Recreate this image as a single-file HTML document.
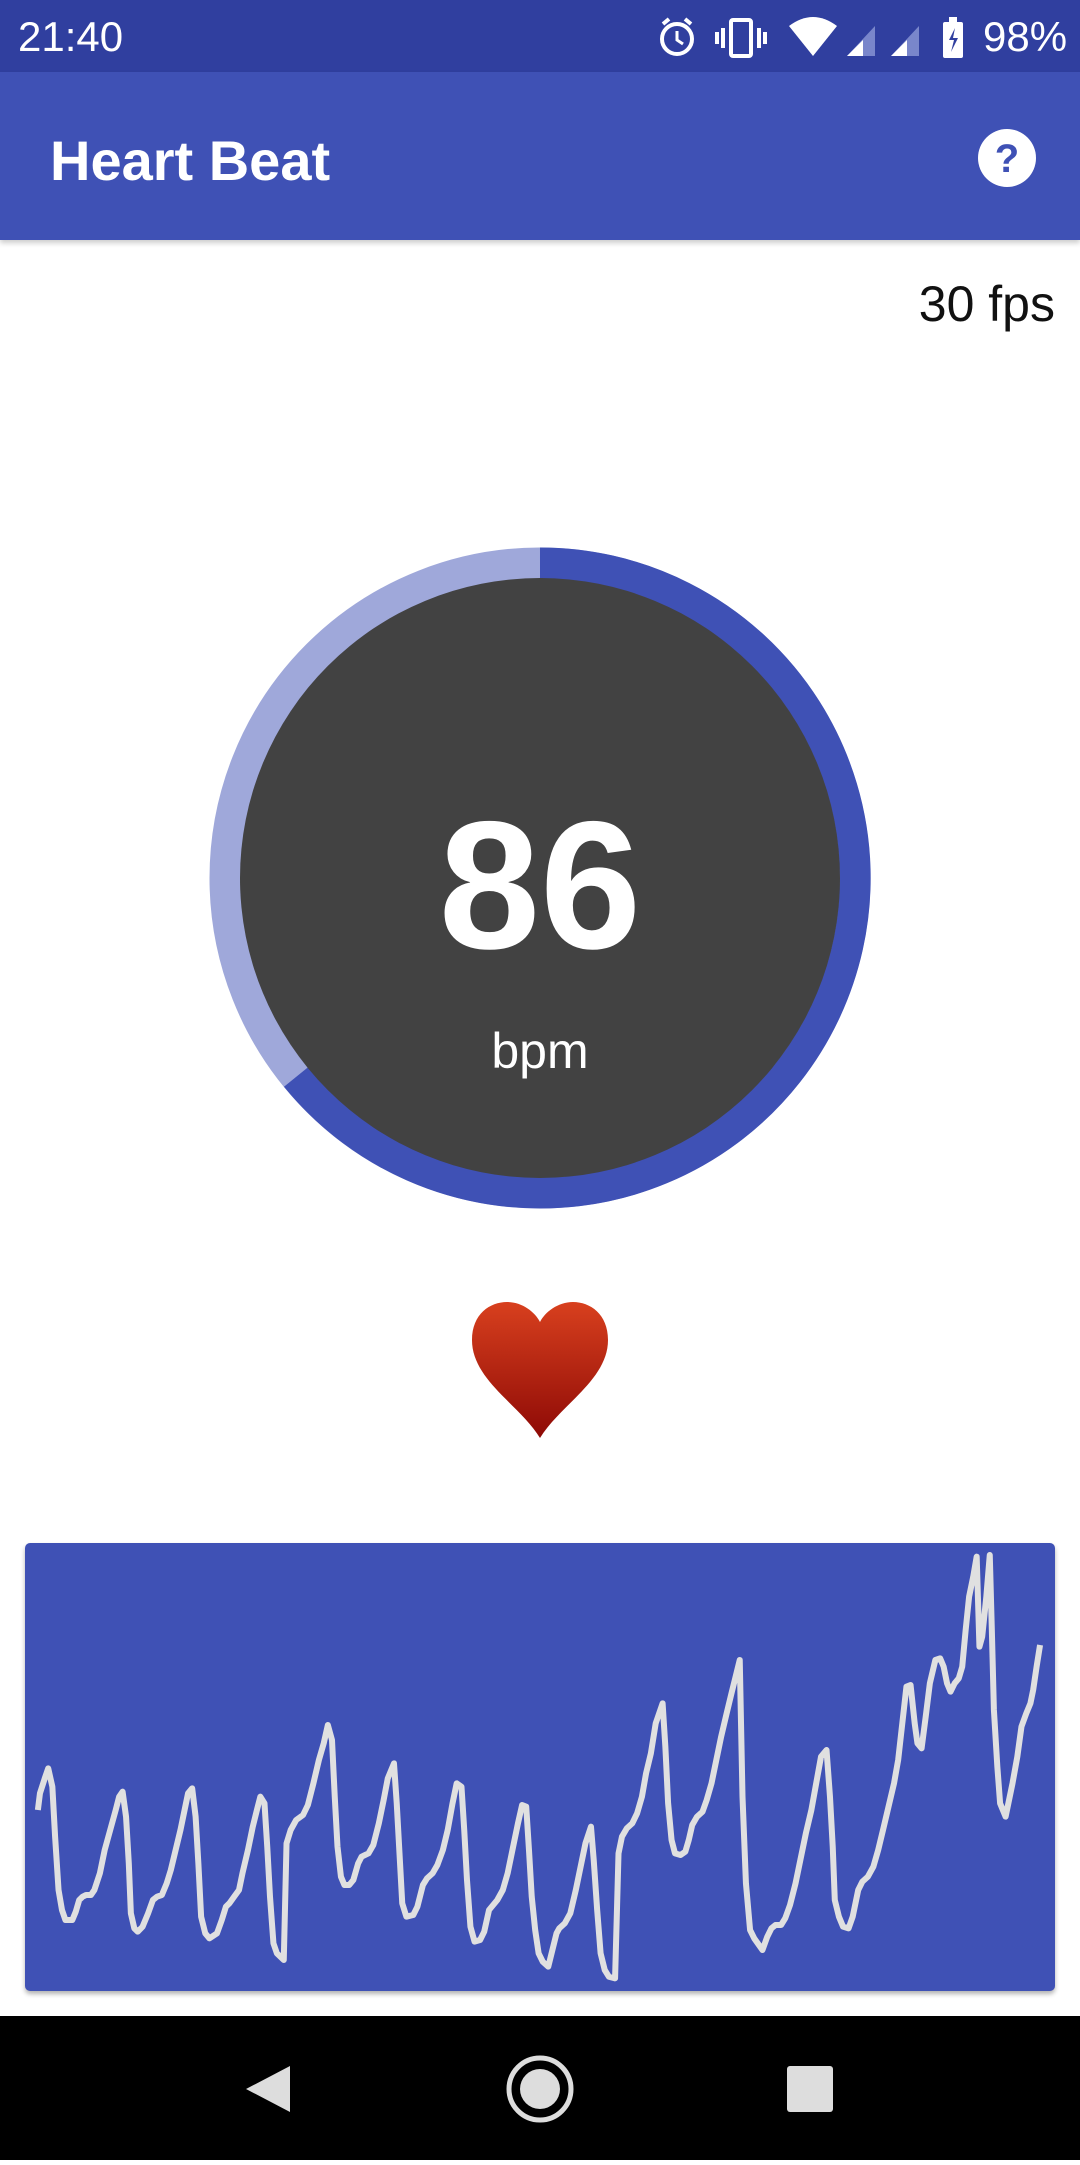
<!DOCTYPE html>
<html><head><meta charset="utf-8"><style>
*{margin:0;padding:0;box-sizing:border-box}
body{width:1080px;height:2160px;position:relative;background:#fff;font-family:"Liberation Sans",sans-serif;overflow:hidden}
.sb{position:absolute;left:0;top:0;width:1080px;height:72px;background:#303F9F;color:#fff}
.ab{position:absolute;left:0;top:72px;width:1080px;height:168px;background:#3F51B5;box-shadow:0 3px 5px rgba(0,0,0,.2)}
.abt{position:absolute;left:50px;top:56px;color:#fff;font-size:56px;font-weight:bold}
.fps{position:absolute;right:25px;top:275px;font-size:50px;color:#111}
.nav{position:absolute;left:0;top:2016px;width:1080px;height:144px;background:#000}
.chart{position:absolute;left:25px;top:1543px;width:1030px;height:448px;background:#3F51B5;border-radius:5px;box-shadow:0 3px 5px rgba(0,0,0,.3)}
</style></head><body>
<div class="sb">
<div style="position:absolute;left:18px;top:13px;font-size:42px">21:40</div>
<svg style="position:absolute;left:655px;top:14px" width="420" height="46" viewBox="0 0 420 46">
<circle cx="22" cy="25" r="15" fill="none" stroke="#fff" stroke-width="4"/><path d="M22 17v9l6 4" stroke="#fff" stroke-width="3" fill="none"/><path d="M8 10l6-5M36 10l-6-5" stroke="#fff" stroke-width="4"/>
<rect x="76" y="6" width="20" height="36" rx="2" fill="none" stroke="#fff" stroke-width="4"/><path d="M68 14v20M104 14v20M62 18v12M110 18v12" stroke="#fff" stroke-width="4"/>
<path d="M134 12 Q158 -6 182 12 L158 42Z" fill="#fff"/>
<path d="M192 42 L220 12 V42Z" fill="#7986CB"/><path d="M192 42 L208 26 V42Z" fill="#fff"/>
<path d="M236 42 L264 12 V42Z" fill="#7986CB"/><path d="M236 42 L252 26 V42Z" fill="#fff"/>
<rect x="288" y="8" width="20" height="36" rx="2" fill="#fff"/><rect x="294" y="3" width="8" height="6" fill="#fff"/><path d="M300 14l-6 12h5l-3 12 7-14h-5z" fill="#303F9F"/>
</svg>
<div style="position:absolute;left:983px;top:13px;font-size:42px">98%</div>
</div>
<div class="ab"><div class="abt">Heart Beat</div>
<svg style="position:absolute;left:977px;top:56px" width="60" height="60" viewBox="0 0 60 60"><circle cx="30" cy="30" r="29" fill="#fff"/><text x="30" y="44" text-anchor="middle" font-family="Liberation Sans" font-weight="bold" font-size="40" fill="#3F51B5">?</text></svg>
</div>
<div class="fps">30 fps</div>
<svg style="position:absolute;left:0;top:0" width="1080" height="1500">
<circle cx="540" cy="878" r="315" fill="none" stroke="#9FA8DA" stroke-width="31"/>
<path d="M540 563 A315 315 0 1 1 296 1077" fill="none" stroke="#3F51B5" stroke-width="31"/>
<circle cx="540" cy="878" r="300" fill="#424242"/>
<text x="540" y="948" text-anchor="middle" font-family="Liberation Sans" font-weight="bold" font-size="182" fill="#fff">86</text>
<text x="540" y="1068" text-anchor="middle" font-family="Liberation Sans" font-size="50" fill="#fff">bpm</text>
<defs><linearGradient id="hg" x1="0" y1="0" x2="0" y2="1"><stop offset="0" stop-color="#D8401E"/><stop offset="1" stop-color="#8E0A06"/></linearGradient></defs>
<path d="M540 1438 C520 1405 472 1380 472 1340 C472 1314 490 1302 507 1302 C522 1302 535 1312 540 1322 C545 1312 558 1302 573 1302 C590 1302 608 1314 608 1340 C608 1380 560 1405 540 1438Z" fill="url(#hg)"/>
</svg>
<div class="chart"></div>
<svg style="position:absolute;left:0;top:1530px" width="1080" height="480" viewBox="0 0 1568 1440" preserveAspectRatio="none">
<polyline fill="none" stroke="#E0E0E0" stroke-linejoin="round" vector-effect="non-scaling-stroke" style="stroke-width:6px" points="55,840 58,790 65,745 70,715 76,770 80,920 85,1080 90,1140 95,1170 105,1170 110,1145 115,1110 120,1100 125,1095 132,1095 137,1080 145,1030 152,960 160,900 168,840 173,800 178,785 183,860 187,1000 190,1150 195,1195 200,1205 207,1190 215,1150 222,1110 228,1100 235,1095 242,1060 248,1020 255,960 262,900 268,840 273,790 279,775 284,860 288,1000 292,1160 298,1210 304,1225 315,1210 322,1170 328,1130 333,1120 340,1100 347,1080 352,1030 360,960 367,890 373,840 378,800 384,820 388,950 392,1100 397,1240 402,1270 412,1290 416,940 422,900 430,870 440,855 447,825 455,760 463,690 470,640 476,585 482,630 486,800 490,950 495,1040 500,1065 507,1065 513,1050 520,1000 525,980 535,970 542,945 550,880 557,810 563,745 572,700 576,820 580,970 584,1120 590,1160 600,1155 606,1130 614,1065 620,1045 628,1030 635,1005 643,960 650,900 657,820 663,760 670,770 674,900 678,1050 683,1190 689,1235 697,1230 703,1205 710,1140 716,1125 722,1110 730,1080 737,1030 745,950 752,880 758,825 764,830 768,960 772,1100 777,1200 782,1270 788,1295 796,1310 802,1260 808,1210 812,1195 820,1180 828,1150 836,1080 843,1010 850,940 858,890 862,990 867,1140 872,1270 878,1320 884,1340 893,1345 898,970 903,920 910,895 918,880 925,850 932,800 938,730 945,670 952,580 962,520 966,650 970,820 975,930 980,970 988,975 995,965 1000,930 1005,885 1012,860 1020,845 1026,810 1033,760 1040,690 1047,620 1055,550 1062,490 1068,440 1074,390 1078,800 1083,1060 1089,1200 1095,1225 1107,1260 1114,1220 1120,1195 1126,1185 1134,1185 1140,1165 1147,1125 1155,1060 1162,990 1170,910 1178,840 1185,760 1192,680 1200,660 1205,800 1209,950 1212,1110 1218,1160 1224,1190 1232,1195 1238,1160 1242,1120 1246,1080 1252,1055 1260,1040 1268,1010 1275,960 1282,900 1290,830 1298,760 1304,690 1310,580 1316,470 1322,465 1328,580 1332,640 1338,655 1344,560 1350,460 1358,390 1365,385 1370,410 1375,460 1380,485 1386,460 1392,445 1397,410 1402,300 1407,200 1413,140 1418,80 1422,350 1426,320 1432,200 1437,75 1440,300 1443,540 1448,710 1452,820 1460,860 1465,810 1470,760 1477,680 1483,590 1490,550 1496,520 1500,480 1505,410 1510,345"/>
</svg>
<div class="nav">
<svg width="1080" height="144" viewBox="0 0 1080 144">
<path d="M290 50 V96 L246 73Z" fill="#ddd"/>
<circle cx="540" cy="73" r="31" fill="none" stroke="#ddd" stroke-width="5"/><circle cx="540" cy="73" r="20" fill="#ddd"/>
<rect x="787" y="50" width="46" height="46" rx="3" fill="#ddd"/>
</svg>
</div>
</body></html>
